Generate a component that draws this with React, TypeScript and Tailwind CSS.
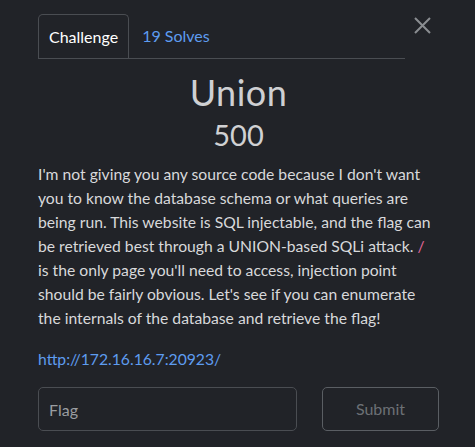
import React from 'react';

export default function App() {
  return (
    <div className="min-h-[447px] w-full bg-[#212328] text-[#d8d9db]" style={{ fontFamily: 'Lato, "Open Sans", sans-serif' }}>
      <div className="pl-[38px] pr-[36px] pt-[14px]">
        {/* Tabs */}
        <div className="flex items-start">
          <div className="flex flex-1 border-b border-[#4a4d52]">
            <button className="-mb-px h-[44px] rounded-t-[5px] border border-b-0 border-[#4a4d52] bg-[#212328] px-[10px] text-[16px] text-white">
              Challenge
            </button>
            <button className="h-[44px] px-[13px] text-[16px] text-[#5e9cf0]">19 Solves</button>
          </div>
          <button className="ml-[8px] mt-[1px] flex h-[20px] w-[26px] items-center justify-start pl-[1px] text-[#8a8d91]">
            <svg width="17" height="17" viewBox="0 0 17 17" fill="none" stroke="currentColor" strokeWidth="2">
              <path d="M1 1 L16 16 M16 1 L1 16" />
            </svg>
          </button>
        </div>

        {/* Title */}
        <div className="mt-[11px] text-center">
          <h1 className="text-[36px] font-normal leading-[44px] tracking-[0.5px] text-[#cfd0d3]">Union</h1>
          <h2 className="mt-[3px] text-[29px] leading-[36px] text-[#d0d1d3]">500</h2>
        </div>

        {/* Description */}
        <p className="mt-[9px] pr-[2px] text-[15.7px] leading-[24px] text-[#d8d9db]">
          I'm not giving you any source code because I don't want you to know the database schema or what queries are
          being run. This website is SQL injectable, and the flag can be retrieved best through a UNION-based SQLi attack.{' '}
          <code className="text-[#e0679a]" style={{ fontFamily: 'Lato, sans-serif' }}>/</code> is the only page you'll need
          to access, injection point should be fairly obvious. Let's see if you can enumerate the internals of the database
          and retrieve the flag!
        </p>

        <a className="mt-[17px] block text-[15.7px] leading-[24px] text-[#5e9cf0]" href="#">
          http://172.16.16.7:20923/
        </a>

        {/* Flag form */}
        <div className="mt-[16px] flex gap-[25px]">
          <input
            className="h-[44px] w-[259px] rounded-[5px] border border-[#4a4d52] bg-transparent px-[10px] text-[16px] text-white placeholder:text-[#9a9da1] outline-none"
            placeholder="Flag"
          />
          <button className="h-[44px] flex-1 rounded-[5px] border border-[#5a5e63] text-[16px] text-[#6c7075]">
            Submit
          </button>
        </div>
      </div>
    </div>
  );
}
